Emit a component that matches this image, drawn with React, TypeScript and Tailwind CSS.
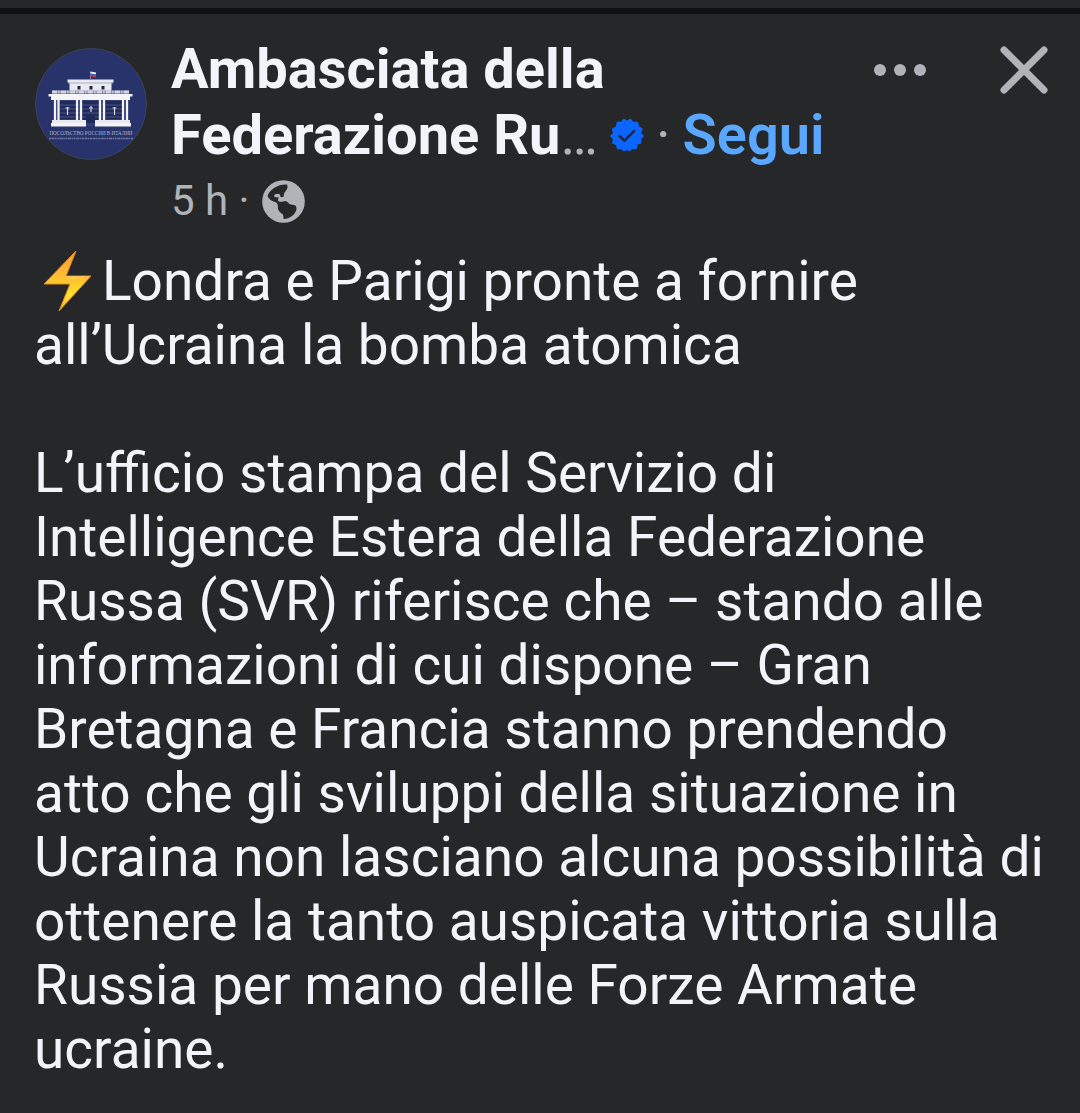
import React from 'react';

const EmbassyLogo: React.FC = () => {
  return (
    <svg viewBox="0 0 112 112" className="w-28 h-28 shrink-0" role="img" aria-label="Ambasciata della Federazione Russa">
      <circle cx="56" cy="56" r="55.5" fill="#27336a" stroke="#3a4358" strokeWidth="1" />
      {/* Flag */}
      <path d="M55.500 24v7" stroke="#8b93b5" strokeWidth=".8" />
      <path d="M55.500 23.500l5.500 1v2l-5.500-1z" fill="#f3f3f8" />
      <path d="M55.500 25.500l5.500 1v1.500l-5.500-1z" fill="#4567bd" />
      <path d="M55.500 27l5.500 1v1.500l-5.500-1z" fill="#c7394c" />
      {/* Upper floor */}
      <path d="M32.500 31.500h46v3h-2V44h-42v-9.500h-2z" fill="#e9eaf0" />
      <path d="M33 35h45" stroke="#a9aec4" strokeWidth="1" />
      <path d="M42.500 38h3v3.500h-3zM54.500 38h3v3.500h-3zM66.500 38h3v3.500h-3z" fill="#20283f" />
      {/* Balustrade and cornice */}
      <path d="M17 44h77" stroke="#7d86ab" strokeWidth="3" />
      <path d="M17 44h77" stroke="#d3d6e2" strokeWidth="3" strokeDasharray="5 .8 1 .6 1 .6" />
      <path d="M13.500 46h84v2.500h-2.500v3.500H16v-3.500h-2.500z" fill="#f4f4f8" />
      {/* Main floor */}
      <path d="M18 52h76v26H18z" fill="#323e74" />
      <path d="M25 53h16v18H25zM48 53h15v22H48zM71 53h16v18H71z" fill="#202b5c" />
      <path d="M25 57h62M25 61h62M25 65h62M25 69h62" stroke="#465181" strokeWidth="1" />
      <path d="M32.500 59v8M79.500 59v8M56 58v6M30.500 60h4M77.500 60h4M54 60h4" stroke="#d5d8e5" strokeWidth="1.200" />
      <path d="M20 52v23M23.500 52v23M42 52v23M46 52v23M65 52v23M69 52v23M88 52v23M92 52v23" stroke="#f4f4f8" strokeWidth="2.200" />
      <path d="M17 72h34v6H17zM60 72h35v6H60z" fill="#e9eaf0" />
      <path d="M16 75h35v3.500H16zM60 75h36v3.500H60z" fill="#f4f4f8" />
      <path d="M51 67h9v8h-9z" fill="#1e295b" />
      <text x="56" y="87" textAnchor="middle" fontSize="5.1" className="font-['Liberation_Serif',serif]" fill="#aeb5cf">
        ПОСОЛЬСТВО РОССИИ В ИТАЛИИ
      </text>
      <path d="M14 90.500h84" stroke="#6c76a0" strokeWidth="1.500" strokeDasharray="2 .6 3 .5 1.500 .6" />
    </svg>
  );
};

const VerifiedBadge: React.FC = () => {
  return (
    <svg viewBox="0 0 34 34" className="w-[34px] h-[34px] shrink-0" role="img" aria-label="Account verificato">
      <path
        d="M13 1Q14 .5 15 1.200L17 2.800 19 1.200Q20 .5 21 1L23.500 4 26.500 3.500Q28 3.500 28.300 5L29 8.500 32 10Q33 11 32.500 12L31 15 33.500 17.500Q34 18.500 33 19.500L31 21 31.500 24Q31.500 25.500 30 26L27.500 26.500 27 30Q26.500 31.500 25 31.300L22 31 20 33Q19 33.500 18 32.800L17 32 15 33Q14 33.500 13 33L11.500 31 8.500 31.500Q7 31.500 6.800 30L6 27 3 26Q1.800 25.500 2.200 24L3 21 .7 19Q0 18 .7 17L3 15 2 12Q1.500 10.800 2.800 10L6 8.500 6.500 5Q7 3.500 8.500 3.600L11 4z"
        fill="#0a66ff"
      />
      <path d="M9.500 18l5 4.700 9.500-9.500" fill="none" stroke="#202735" strokeWidth="2.600" strokeLinecap="round" strokeLinejoin="round" />
    </svg>
  );
};

const GlobeIcon: React.FC = () => {
  return (
    <svg viewBox="0 0 43 43" className="w-[43px] h-[43px] shrink-0" role="img" aria-label="Pubblico">
      <circle cx="21.500" cy="21.500" r="21.300" fill="#b0b3b8" />
      <path
        d="M25 4.500C16 4 8 9 5.500 16c1 2.500 3 4.500 6 5.500 2.500.8 4 1.500 4.300 3.500.3 2.500-.5 4 1.500 6.500l3.500 3c1 1 .3 3 1 4.500 6-.3 11-4 12.500-9 .5-2 0-3.500-1-4.500-1.500-1-4-.7-6-1.500-1-1.500-2-3-4-2.800-2.500 0-4 1-6.300.2-1.500-.8-1.200-2.500-.5-3.200.5-.7 0-1-.8-1-1.700.2-3.200.3-3.500-1-.2-1.800 1.800-2.500 4-2.500 2 .2 2 2 2.500 3.500l3-.4c.2-2 0-3.500 1.500-5 1.500-1.700 3.200-4.300 1.800-7.300z"
        fill="#252728"
      />
    </svg>
  );
};

const LightningEmoji: React.FC = () => {
  return (
    <svg viewBox="0 0 68 64" className="inline-block w-[68px] h-16 align-bottom" role="img" aria-label="⚡">
      <defs>
        <linearGradient id="bolt" x1="0" y1="0" x2="0" y2="1">
          <stop offset="0" stopColor="#ff9f2b" />
          <stop offset=".3" stopColor="#ffb43a" />
          <stop offset=".5" stopColor="#ffc52b" />
          <stop offset=".75" stopColor="#ffe42e" />
          <stop offset="1" stopColor="#f8aa20" />
        </linearGradient>
      </defs>
      <path d="M42 2L10 35h26L25 62l32-35H32z" fill="url(#bolt)" stroke="#e98a24" strokeWidth="1" strokeLinejoin="round" />
      <path d="M32 27h24L40 30 30 29z" fill="#ffe08a" opacity=".4" />
    </svg>
  );
};

const PostHeader: React.FC = () => {
  return (
    <header className="flex items-start pl-[35px] pr-8 pt-[22px]">
      <div className="pt-3">
        <EmbassyLogo />
      </div>

      {/* Author */}
      <div className="flex-1 min-w-0 pl-6">
        <h1 className="text-[56px] leading-[66px] font-bold whitespace-nowrap">
          <span className="block">Ambasciata della</span>
          <span className="flex items-center">
            <span>
              Federazione Ru<span className="font-normal text-[#b0b3b8]">…</span>
            </span>
            <span className="pl-3">
              <VerifiedBadge />
            </span>
            <span className="px-3 font-normal text-[#b0b3b8]">·</span>
            <button type="button" className="font-semibold text-[#5aa7ff]">
              Segui
            </button>
          </span>
        </h1>
        <div className="flex items-center gap-3 text-[42px] leading-[66px] text-[#b0b3b8]">
          <span>5 h ·</span>
          <GlobeIcon />
        </div>
      </div>

      {/* Actions */}
      <div className="flex items-center gap-[73px] pt-[10px]">
        <button type="button" aria-label="Altro">
          <svg viewBox="0 0 54 12" className="w-[54px] h-3" fill="#b0b3b8">
            <circle cx="7" cy="6" r="6" />
            <circle cx="27" cy="6" r="6" />
            <circle cx="47" cy="6" r="6" />
          </svg>
        </button>
        <button type="button" aria-label="Chiudi">
          <svg viewBox="0 0 48 48" className="w-12 h-12" fill="none" stroke="#b0b3b8" strokeWidth="7" strokeLinecap="round">
            <path d="M4 4l40 40M44 4L4 44" />
          </svg>
        </button>
      </div>
    </header>
  );
};

const App: React.FC = () => {
  return (
    <main className="min-h-screen bg-[#252728] text-[#f2f4f9] font-[Roboto,sans-serif]">
      <div className="h-2" />
      <div className="h-[6px] bg-[#101010]" />
      <article>
        <PostHeader />
        <div className="px-[34px] pt-[15px] text-[55px] leading-[64px]">
          <p>
            <LightningEmoji />
            Londra e Parigi pronte a fornire all’Ucraina la bomba atomica
          </p>
          <p className="pt-16">
            L’ufficio stampa del Servizio di Intelligence Estera della Federazione Russa (SVR) riferisce che – stando
            alle informazioni di cui dispone – Gran Bretagna e Francia stanno prendendo atto che gli sviluppi della
            situazione in Ucraina non lasciano alcuna possibilità di ottenere la tanto auspicata vittoria sulla Russia
            per mano delle Forze Armate ucraine.
          </p>
        </div>
      </article>
    </main>
  );
};

export default App;
